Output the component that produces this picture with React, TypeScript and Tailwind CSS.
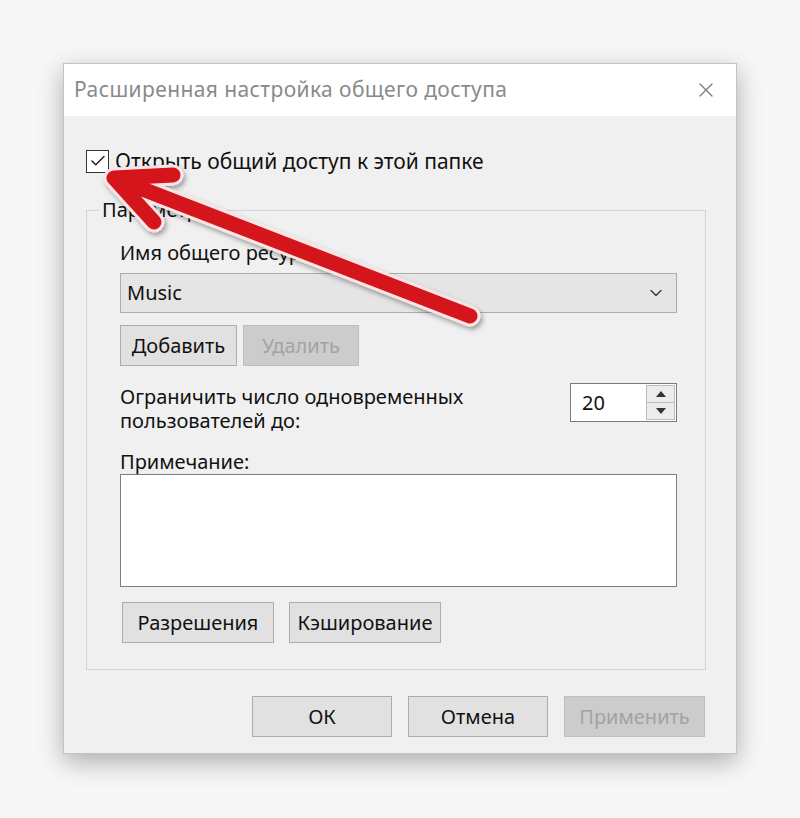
import { Check, X, ChevronDown } from 'lucide-react'

function Btn({ label, disabled, w }: { label: string; disabled?: boolean; w: string }) {
  return (
    <button
      className={
        disabled
          ? `${w} h-[41px] bg-[#cccccc] border border-[#bfbfbf] text-[#a3a3a3] text-[20px] leading-none`
          : `${w} h-[41px] bg-[#e1e1e1] border border-[#adadad] text-[#111] text-[20px] leading-none`
      }
    >
      {label}
    </button>
  )
}

function Arrow() {
  const d = 'M470 316 L114 178 M173 175 L114 178 L154 222'
  return (
    <svg className="absolute left-0 top-0 pointer-events-none" width="800" height="818" viewBox="0 0 800 818">
      <defs>
        <filter id="sh" x="-20%" y="-20%" width="140%" height="140%">
          <feDropShadow dx="2" dy="3" stdDeviation="2.5" floodColor="#000" floodOpacity="0.35" />
        </filter>
      </defs>
      <g filter="url(#sh)">
        <path d={d} stroke="#fbe4e4" strokeWidth="21" fill="none" strokeLinecap="round" strokeLinejoin="round" />
        <path d={d} stroke="#d4141d" strokeWidth="15" fill="none" strokeLinecap="round" strokeLinejoin="round" />
      </g>
    </svg>
  )
}

export default function App() {
  return (
    <div className="relative w-[800px] h-[818px] bg-[#f7f7f7] pt-[63px] pl-[63px] font-['Noto_Sans',sans-serif] text-[#111]">
      {/* окно диалога */}
      <div className="w-[674px] h-[691px] bg-[#f0f0f0] border border-[#c4c4c4] shadow-[0_8px_24px_rgba(0,0,0,0.3)] flex flex-col">
        <div className="h-[52px] bg-white flex items-center justify-between pl-[10px] pr-[18px]">
          <span className="text-[21px] tracking-[0.4px] text-[#8a8a8a]">Расширенная настройка общего доступа</span>
          <X className="w-[24px] h-[24px] text-[#7a7a7a]" strokeWidth={1.2} />
        </div>

        <div className="flex-1 pl-[22px] pt-[33px]">
          {/* чекбокс */}
          <div className="flex items-center gap-[6px] h-[24px]">
            <div className="w-[23px] h-[23px] border border-[#333] bg-white flex items-center justify-center">
              <Check className="w-[18px] h-[18px] text-[#222]" strokeWidth={2} />
            </div>
            <span className="text-[21px] leading-[24px]">Открыть общий доступ к этой папке</span>
          </div>

          <fieldset className="mt-[25px] w-[620px] border border-[#d6d6d6] p-0">
            <legend className="ml-[12px] px-[3px] text-[20px] leading-[24px]">Параметры</legend>
            <div className="pl-[33px] pr-[28px] pb-[26px]">
              <div className="mt-[19px] text-[20px] leading-[24px]">Имя общего ресурса:</div>

              <div className="mt-[8px] h-[40px] bg-[#e5e5e5] border border-[#adadad] flex items-center justify-between pl-[6px] pr-[10px]">
                <span className="text-[20px]">Music</span>
                <ChevronDown className="w-[20px] h-[20px] text-[#333]" strokeWidth={1.5} />
              </div>

              <div className="mt-[12px] flex gap-[6px]">
                <Btn label="Добавить" w="w-[117px]" />
                <Btn label="Удалить" w="w-[116px]" disabled />
              </div>

              <div className="mt-[17px] flex justify-between items-start">
                <div className="pt-[2px] text-[20px] leading-[24px]">
                  <div>Ограничить число одновременных</div>
                  <div>пользователей до:</div>
                </div>
                <div className="w-[107px] h-[39px] bg-white border border-[#7a7a7a] flex items-center justify-between pl-[11px] pr-[1px]">
                  <span className="text-[20px]">20</span>
                  <div className="w-[29px] h-[35px] flex flex-col border border-[#bdbdbd]">
                    <div className="flex-1 bg-[#ececec] border-b border-[#bdbdbd] flex items-center justify-center">
                      <svg width="10" height="6" viewBox="0 0 10 6">
                        <path d="M0 6 L5 0 L10 6 Z" fill="#333" />
                      </svg>
                    </div>
                    <div className="flex-1 bg-[#ececec] flex items-center justify-center">
                      <svg width="10" height="6" viewBox="0 0 10 6">
                        <path d="M0 0 L5 6 L10 0 Z" fill="#333" />
                      </svg>
                    </div>
                  </div>
                </div>
              </div>

              <div className="mt-[17px] text-[20px] leading-[24px]">Примечание:</div>
              <div className="h-[113px] bg-white border border-[#7f7f7f]" />

              <div className="mt-[15px] flex gap-[15px] pl-[2px]">
                <Btn label="Разрешения" w="w-[152px]" />
                <Btn label="Кэширование" w="w-[152px]" />
              </div>
            </div>
          </fieldset>

          <div className="mt-[26px] w-[620px] flex justify-end gap-[16px] pr-[1px]">
            <Btn label="ОК" w="w-[140px]" />
            <Btn label="Отмена" w="w-[140px]" />
            <Btn label="Применить" w="w-[141px]" disabled />
          </div>
        </div>
      </div>

      <Arrow />
    </div>
  )
}
